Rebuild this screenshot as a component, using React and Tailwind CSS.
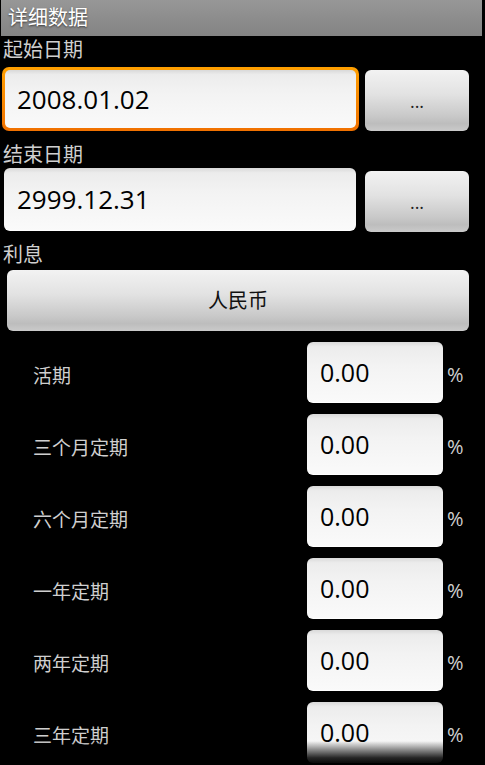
import React from 'react'

const rates = ['活期', '三个月定期', '六个月定期', '一年定期', '两年定期', '三年定期']

const fieldBg = "bg-[linear-gradient(180deg,#d9d9d9_0%,#ececec_8%,#f3f3f3_40%,#fafafa_100%)]"
const btnBg = "bg-[linear-gradient(180deg,#f2f2f2_0%,#e2e2e2_40%,#c9c9c9_75%,#bdbdbd_88%,#cacaca_100%)]"

const Label = ({ children, className }) => (
  <div className={`flex items-end pl-[3px] text-[20px] leading-[20px] text-[#cfcfcf] ${className}`}>
    {children}
  </div>
)

const App = () => {
  return (
    <div className="relative h-[765px] w-[485px] overflow-hidden bg-black font-['Open_Sans','Noto_Sans_CJK_SC',sans-serif]">
      <div className="ml-[1px] mr-[3px] flex h-[36px] items-center bg-[linear-gradient(180deg,#979797_0%,#8b8b8b_60%,#848484_100%)] pl-[7px] text-[20px] text-white [text-shadow:0_1px_2px_rgba(0,0,0,0.6)]">
        详细数据
      </div>

      <Label className="h-[31px] pb-[7px]">起始日期</Label>
      <div className="flex h-[65px]">
        <div className="ml-[2px] flex h-[64px] w-[357px] items-center rounded-[7px] bg-[linear-gradient(180deg,#ffa000,#f07000)] p-[3px]">
          <div className={`flex h-full w-full items-center rounded-[5px] pl-[12px] text-[26px] text-black ${fieldBg}`}>
            2008.01.02
          </div>
        </div>
        <div className={`ml-[6px] mt-[3px] flex h-[61px] w-[104px] items-center justify-center rounded-[6px] pt-[2px] text-[18px] text-[#222] ${btnBg}`}>
          ...
        </div>
      </div>

      <Label className="h-[36px] pb-[3px]">结束日期</Label>
      <div className="flex h-[64px]">
        <div className={`ml-[4px] flex h-[63px] w-[352px] items-center rounded-[6px] border-b border-white pl-[13px] text-[26px] text-black ${fieldBg}`}>
          2999.12.31
        </div>
        <div className={`ml-[9px] mt-[3px] flex h-[61px] w-[104px] items-center justify-center rounded-[6px] pt-[2px] text-[18px] text-[#222] ${btnBg}`}>
          ...
        </div>
      </div>

      <Label className="h-[38px] pb-[5px]">利息</Label>
      <div className={`ml-[7px] flex h-[61px] w-[462px] items-center justify-center rounded-[6px] text-[20px] text-[#111] ${btnBg}`}>
        人民币
      </div>

      <div className="mt-[11px] flex flex-col gap-[11px]">
        {rates.map((name) => (
          <div key={name} className="flex h-[61px] items-center">
            <div className="w-[307px] pl-[33px] pt-[7px] text-[19px] text-[#cfcfcf]">{name}</div>
            <div className={`flex h-[61px] w-[136px] items-center rounded-[6px] border-b border-white pl-[13px] pt-[2px] text-[25px] text-black ${fieldBg}`}>
              0.00
            </div>
            <div className="ml-[4px] pt-[4px] text-[20px] text-[#cfcfcf]">%</div>
          </div>
        ))}
      </div>

      <div className="pointer-events-none absolute bottom-0 left-0 h-[24px] w-full bg-[linear-gradient(180deg,rgba(0,0,0,0)_0%,rgba(0,0,0,0.85)_70%,#000_100%)]" />
    </div>
  )
}

export default App
